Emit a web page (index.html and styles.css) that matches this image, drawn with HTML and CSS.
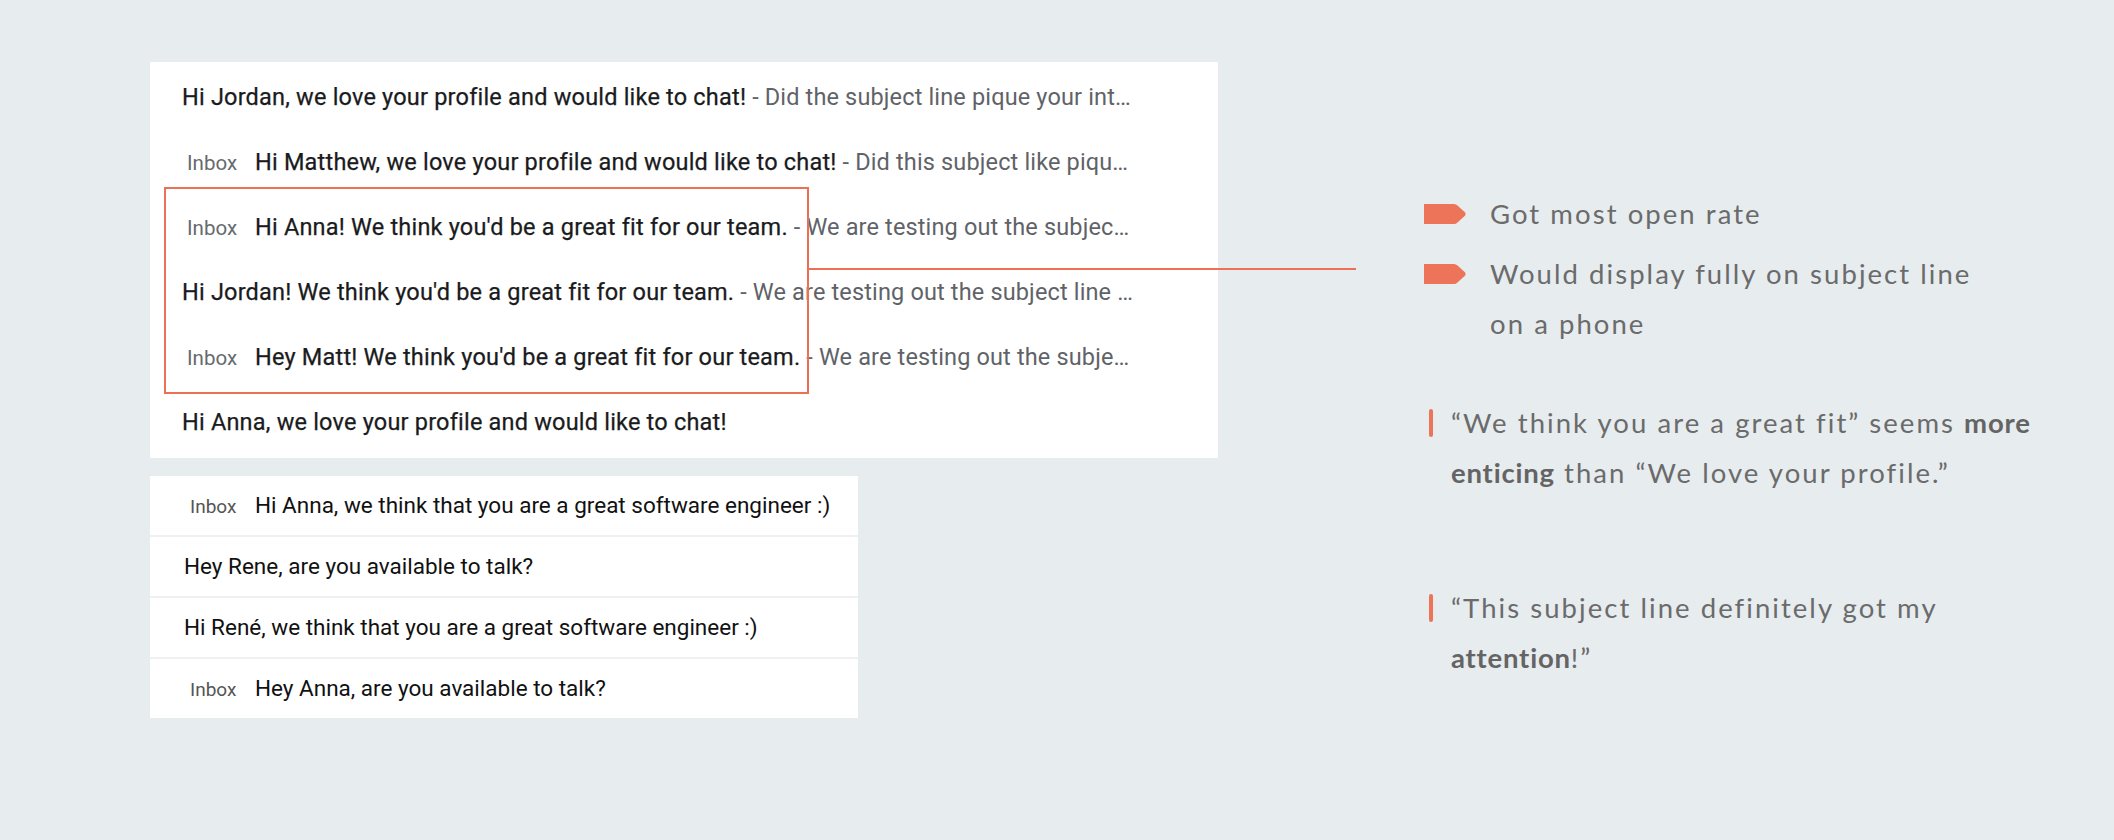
FILE: index.html
```html
<!DOCTYPE html>
<html lang="en">
<head>
<meta charset="utf-8">
<title>Subject line test</title>
<link rel="stylesheet" href="styles.css">
</head>
<body>
<div class="page">
  <div class="mail-col">
    <div class="card card-a">
      <div class="row"><span class="subj">Hi Jordan, we love your profile and would like to chat!</span><span class="prev"> - Did the subject line pique your int…</span></div>
      <div class="row"><span class="label">Inbox</span><span class="subj">Hi Matthew, we love your profile and would like to chat!</span><span class="prev"> - Did this subject like piqu…</span></div>
      <div class="row"><span class="label">Inbox</span><span class="subj">Hi Anna! We think you'd be a great fit for our team.</span><span class="prev"> - We are testing out the subjec…</span></div>
      <div class="row"><span class="subj">Hi Jordan! We think you'd be a great fit for our team.</span><span class="prev"> - We are testing out the subject line …</span></div>
      <div class="row"><span class="label">Inbox</span><span class="subj">Hey Matt! We think you'd be a great fit for our team.</span><span class="prev"> - We are testing out the subje…</span></div>
      <div class="row"><span class="subj">Hi Anna, we love your profile and would like to chat!</span></div>
      <div class="highlight"><div class="connector"></div></div>
    </div>
    <div class="card card-b">
      <div class="row"><span class="label">Inbox</span><span class="subj">Hi Anna, we think that you are a great software engineer :)</span></div>
      <div class="row"><span class="subj">Hey Rene, are you available to talk?</span></div>
      <div class="row"><span class="subj">Hi René, we think that you are a great software engineer :)</span></div>
      <div class="row"><span class="label">Inbox</span><span class="subj">Hey Anna, are you available to talk?</span></div>
    </div>
  </div>
  <div class="notes">
    <div class="point point-first">
      <svg class="tag" width="42" height="20" viewBox="0 0 42 20"><path d="M0 0 H30 Q32 0 33.5 1.6 L41.2 8.6 Q42 10 41.2 11.4 L33.5 18.4 Q32 20 30 20 H0 Z" fill="#ee7459"/></svg>
      <p class="note-text">Got most open rate</p>
    </div>
    <div class="point">
      <svg class="tag" width="42" height="20" viewBox="0 0 42 20"><path d="M0 0 H30 Q32 0 33.5 1.6 L41.2 8.6 Q42 10 41.2 11.4 L33.5 18.4 Q32 20 30 20 H0 Z" fill="#ee7459"/></svg>
      <p class="note-text">Would display fully on subject line<br>on a phone</p>
    </div>
    <div class="quote quote-first">
      <span class="bar"></span>
      <p class="note-text">“We think you are a great fit” seems <b>more</b><br><b>enticing</b> than “We love your profile.”</p>
    </div>
    <div class="quote">
      <span class="bar"></span>
      <p class="note-text">“This subject line definitely got my<br><b>attention</b>!”</p>
    </div>
  </div>
</div>
</body>
</html>
```
FILE: styles.css
```css
html, body {
  margin: 0;
  padding: 0;
}
body {
  background: #e7ecef;
  width: 2114px;
  height: 840px;
  overflow: hidden;
}
.page {
  display: flex;
  gap: 206px;
  padding: 62px 0 0 150px;
}
.mail-col {
  display: flex;
  flex-direction: column;
  align-items: flex-start;
  gap: 18px;
}
.card {
  background: #ffffff;
  font-family: Roboto, "Liberation Sans", sans-serif;
  white-space: nowrap;
}
.card-a {
  position: relative;
  box-sizing: border-box;
  width: 1068px;
  height: 396px;
  padding: 3px 0;
}
.card-a .row {
  height: 65px;
  line-height: 65px;
  padding-left: 32px;
  font-size: 23.5px;
}
.card-a .subj {
  color: #1a1b1d;
  font-weight: 400;
  letter-spacing: 0.2px;
  -webkit-text-stroke: 0.25px #1a1b1d;
}
.card-a .prev {
  color: #5f6368;
  letter-spacing: 0.15px;
}
.card-a .label {
  display: inline-block;
  width: 68px;
  margin-left: 5px;
  font-size: 20.5px;
  color: #666a6e;
}
.highlight {
  position: absolute;
  left: 14px;
  top: 125px;
  width: 645px;
  height: 207px;
  box-sizing: border-box;
  border: 2px solid #ec7056;
}
.connector {
  position: absolute;
  left: 100%;
  top: 79px;
  width: 549px;
  height: 2px;
  background: #ec7056;
}
.card-b {
  width: 708px;
}
.card-b .row {
  height: 59px;
  line-height: 59px;
  padding-left: 34px;
  font-size: 22.5px;
  color: #111111;
}
.card-b .row + .row {
  border-top: 2px solid #eef0f1;
}
.card-b .label {
  display: inline-block;
  width: 65px;
  margin-left: 6px;
  font-size: 19px;
  color: #555555;
}
.notes {
  padding-top: 127px;
  font-family: Lato, "Liberation Sans", sans-serif;
  font-size: 27.5px;
  line-height: 50px;
  letter-spacing: 2.05px;
  color: #6b6b6b;
}
.note-text {
  margin: 0;
  white-space: nowrap;
}
.note-text b {
  font-weight: 700;
  color: #646464;
  letter-spacing: 0.8px;
}
.point {
  display: flex;
  align-items: flex-start;
  gap: 24px;
}
.point-first {
  margin-bottom: 10px;
}
.tag {
  flex: none;
  margin-top: 15px;
}
.quote {
  display: flex;
  align-items: flex-start;
  padding-left: 5px;
  gap: 18px;
}
.quote-first {
  margin-top: 49px;
  margin-bottom: 85px;
}
.bar {
  flex: none;
  width: 4px;
  height: 28px;
  margin-top: 11px;
  border-radius: 2px;
  background: #ee7459;
}
```
